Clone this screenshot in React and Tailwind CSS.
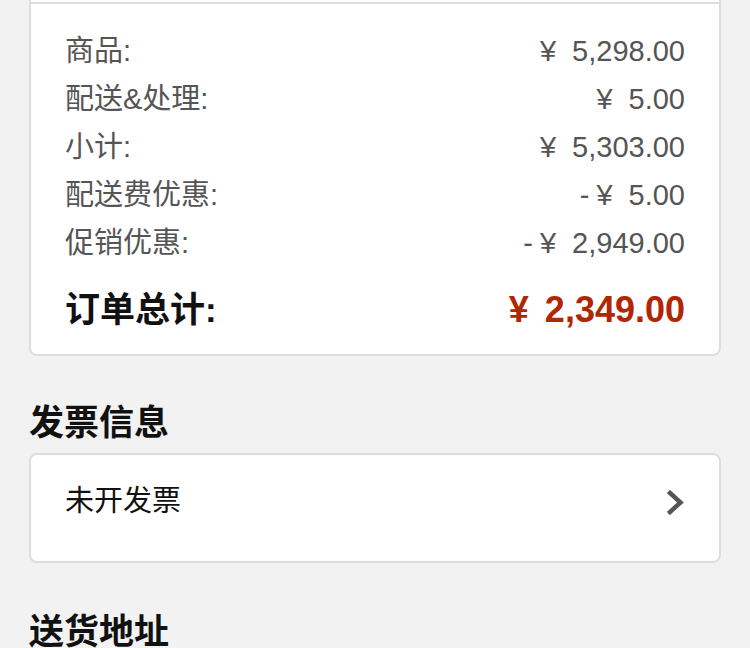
import React from 'react';

const font = { fontFamily: '"Liberation Sans", "Noto Sans CJK SC", sans-serif' };

const rows = [
  { label: '商品:', value: '¥ 5,298.00' },
  { label: '配送&处理:', value: '¥ 5.00' },
  { label: '小计:', value: '¥ 5,303.00' },
  { label: '配送费优惠:', value: '-¥ 5.00' },
  { label: '促销优惠:', value: '-¥ 2,949.00' },
];

const Price = ({ value }) => {
  const neg = value.startsWith('-');
  const num = value.replace('-', '').replace('¥ ', '');
  return (
    <span className="flex items-center">
      {neg && <span className="mr-[7px]">-</span>}
      <span className="mr-[16px]">¥</span>
      <span>{num}</span>
    </span>
  );
};

const App = () => {
  return (
    <div className="min-h-[648px] w-[750px] overflow-hidden bg-[#f2f2f2] px-[29px]" style={font}>
      <div className="rounded-b-[8px] border-x-2 border-b-2 border-[#dddddd] bg-white">
        <div className="h-[2px]" />
        <div className="border-t-2 border-[#dddddd] px-[34px] pt-[24px] pb-[20px]">
          {rows.map((r) => (
            <div key={r.label} className="flex h-[48px] items-center justify-between text-[29px] text-[#555555]">
              <span>{r.label}</span>
              <Price value={r.value} />
            </div>
          ))}
          <div className="mt-[18px] flex h-[48px] items-center justify-between font-bold">
            <span className="text-[35px] text-[#111111]">订单总计:</span>
            <span className="flex items-center text-[36px] text-[#b12704]">
              <span className="mr-[16px]">¥</span>
              <span>2,349.00</span>
            </span>
          </div>
        </div>
      </div>

      <h2 className="mt-[43px] mb-[6px] h-[48px] text-[35px] font-bold leading-[48px] text-[#111111]">发票信息</h2>
      <div className="flex h-[110px] items-center justify-between rounded-[8px] border-2 border-[#dddddd] bg-white pr-[35px] pb-[12px] pl-[34px]">
        <span className="text-[29px] text-[#111111]">未开发票</span>
        <svg width="17" height="25" viewBox="0 0 17 25">
          <polyline points="3,3 13.5,12.5 3,22" fill="none" stroke="#555555" strokeWidth="4.5" strokeLinecap="square" />
        </svg>
      </div>

      <h2 className="mt-[45px] h-[48px] text-[35px] font-bold leading-[48px] text-[#111111]">送货地址</h2>
    </div>
  );
};

export default App;
